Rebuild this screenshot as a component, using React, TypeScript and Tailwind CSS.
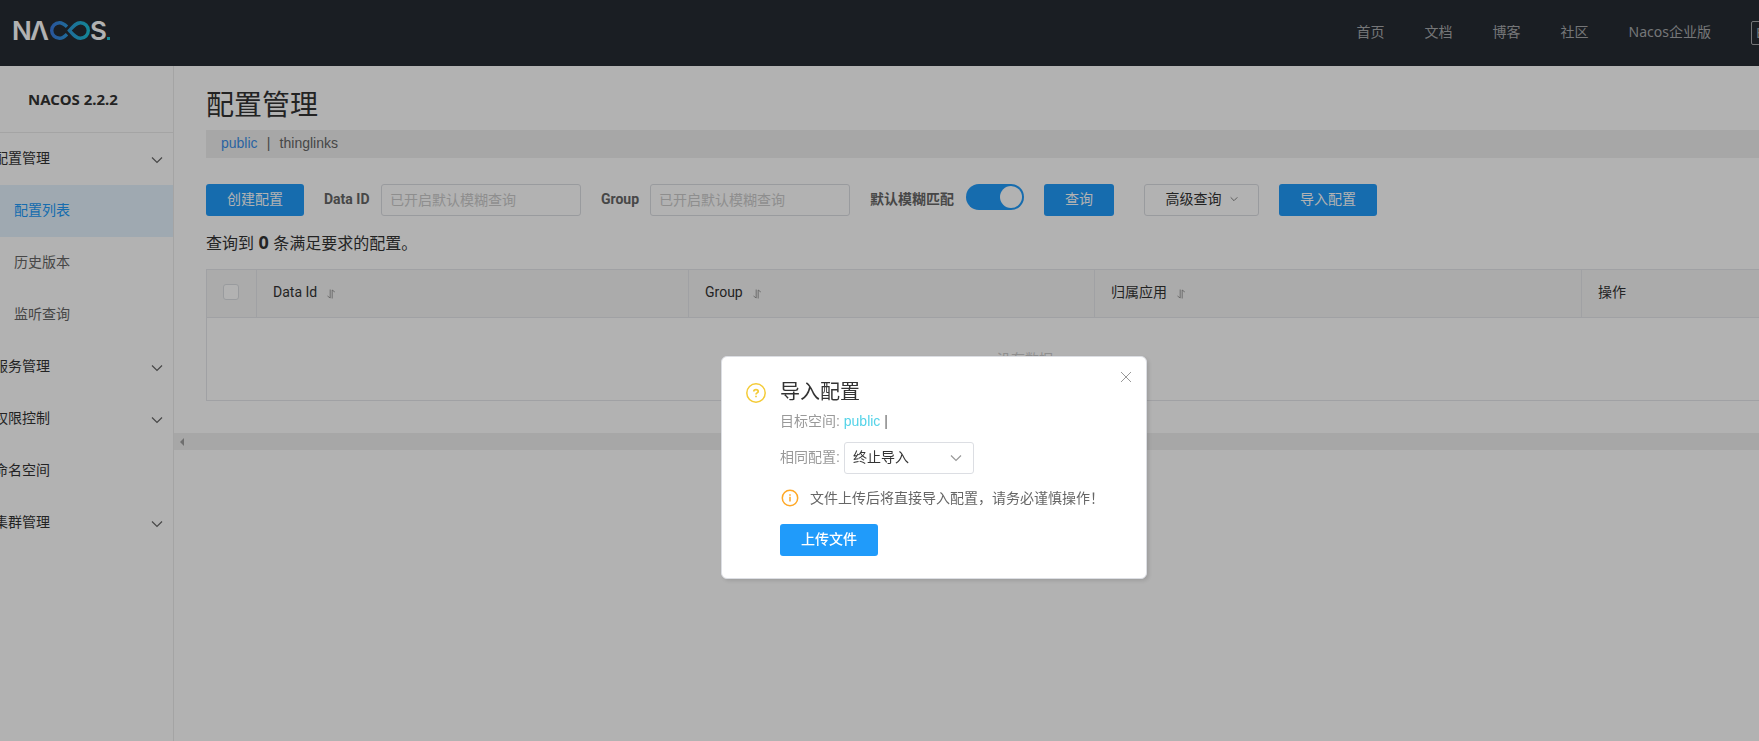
import { useState } from "react";

const FONT = "font-['Liberation_Sans','Noto_Sans_CJK_SC',sans-serif]";

const NAV_LINKS = ["首页", "文档", "博客", "社区", "Nacos企业版"];

type MenuItem = {
  label: string;
  child?: boolean;
  active?: boolean;
  expandable?: boolean;
};

const MENU: MenuItem[] = [
  { label: "配置管理", expandable: true },
  { label: "配置列表", child: true, active: true },
  { label: "历史版本", child: true },
  { label: "监听查询", child: true },
  { label: "服务管理", expandable: true },
  { label: "权限控制", expandable: true },
  { label: "命名空间" },
  { label: "集群管理", expandable: true },
];

function Chevron({ className }: { className: string }) {
  return (
    <svg viewBox="0 0 12 12" className={className} fill="none" stroke="currentColor" aria-hidden="true">
      <path d="M1 3.5 L6 8.5 L11 3.5" strokeWidth="1.2" />
    </svg>
  );
}

function SortIcon() {
  return (
    <svg viewBox="0 0 8 10" className="h-2.5 w-2" fill="none" stroke="currentColor" strokeWidth="0.8" aria-hidden="true">
      <path d="M0.5 7 L3.2 9 V0.5 M5.200 9.5 V1 L7.8 3" />
    </svg>
  );
}

function Logo() {
  return (
    <svg viewBox="-2 -6 100 36" className="h-9 w-[100px]" role="img" aria-label="NACOS">
      <defs>
        <linearGradient id="loop" gradientUnits="userSpaceOnUse" x1="37" y1="0" x2="76" y2="0">
          <stop offset="0" stopColor="#3b7be0" />
          <stop offset="1" stopColor="#1cc3d8" />
        </linearGradient>
      </defs>
      <g fill="#fff" className="font-['Inter',sans-serif] text-[26px] font-semibold">
        <text x="-2" y="21">N</text>
        <text x="16" y="21">Λ</text>
        <text x="76" y="21">S</text>
      </g>
      <path
        d="M53 7.800 C50 4.800 48 3.700 45.500 3.700 A7.800 7.800 0 0 0 45.500 19.300 C48 19.300 50 18.200 53 15.200 M55.500 11.500 C59.500 7 62 3.700 66.500 3.700 A7.800 7.800 0 0 1 66.500 19.300 C62 19.300 59.500 16 55.500 11.500 Z"
        fill="none"
        stroke="url(#loop)"
        strokeWidth="3.400"
      />
      <rect x="93" y="18" width="3" height="3" fill="#1cc3d8" />
    </svg>
  );
}

function Header() {
  return (
    <header className="flex h-[66px] items-center justify-between bg-[#262c33] pl-3">
      <a href="#home" className="-mt-1">
        <Logo />
      </a>
      <nav className="-mr-8 flex shrink-0 items-center font-['Noto_Sans','Noto_Sans_CJK_SC',sans-serif] text-sm text-[#a8aaad]">
        {NAV_LINKS.map((label) => (
          <a key={label} href="#nav" className="px-5 pb-0.5">
            {label}
          </a>
        ))}
        <button type="button" className="ml-5 h-6 w-10 rounded-xs border border-[#a8aaad] pl-1 text-left leading-5">
          En
        </button>
      </nav>
    </header>
  );
}

function Sidebar() {
  return (
    <aside className="w-[174px] shrink-0 overflow-hidden border-r border-[#ebebeb]">
      <div className="-ml-[27px]">
        <h2 className="flex h-[67px] items-center justify-center border-b border-[#ebebeb] font-['Noto_Sans',sans-serif] text-[15px] font-bold text-[#333]">
          NACOS 2.2.2
        </h2>
        <ul>
          {MENU.map((item) => (
            <li key={item.label}>
              <a
                href="#menu"
                className={`flex h-[52px] items-center justify-between pr-2.5 pb-0.5 text-sm ${
                  item.child ? "pl-[41px]" : "pl-[21px]"
                } ${item.active ? "bg-[#e4f3fe] text-[#209bfa]" : item.child ? "text-[#666]" : "text-[#333]"}`}
              >
                {item.label}
                {item.expandable ? <Chevron className="mt-1 size-3 text-[#666]" /> : null}
              </a>
            </li>
          ))}
        </ul>
      </div>
    </aside>
  );
}

const PRIMARY = "h-8 shrink-0 rounded-[3px] bg-[#209bfa] pb-0.5 text-sm text-white";
const FIELD = "h-8 w-[200px] rounded-[3px] border border-[#dcdee3] px-2 text-sm outline-none placeholder:text-[#ccc]";
const LABEL = "pb-0.5 font-['Roboto','Noto_Sans_CJK_SC',sans-serif] text-sm font-bold text-[#666]";

function SearchBar() {
  const [fuzzy, setFuzzy] = useState(true);

  return (
    <form className="mt-[26px] flex h-8 items-center whitespace-nowrap" onSubmit={(event) => event.preventDefault()}>
      <button type="button" className={`${PRIMARY} w-[98px]`}>
        创建配置
      </button>
      <label htmlFor="dataId" className={`${LABEL} ml-5 w-[57px]`}>
        Data ID
      </label>
      <input id="dataId" type="text" placeholder="已开启默认模糊查询" className={FIELD} />
      <label htmlFor="group" className={`${LABEL} ml-5 w-[49px]`}>
        Group
      </label>
      <input id="group" type="text" placeholder="已开启默认模糊查询" className={FIELD} />
      <label htmlFor="fuzzy" className={`${LABEL} ml-5`}>
        默认模糊匹配
      </label>
      <input
        id="fuzzy"
        type="checkbox"
        role="switch"
        checked={fuzzy}
        onChange={(event) => setFuzzy(event.target.checked)}
        className="ml-3 flex h-[26px] w-[58px] shrink-0 appearance-none self-start rounded-full bg-[#ccc] p-0.5 before:size-[22px] before:rounded-full before:bg-white checked:justify-end checked:bg-[#209bfa]"
      />
      <button type="submit" className={`${PRIMARY} ml-5 w-[70px]`}>
        查询
      </button>
      <button
        type="button"
        className="ml-[30px] flex h-8 w-[115px] items-center justify-center gap-2 rounded-[3px] border border-[#dcdee3] pb-0.5 text-sm text-[#333]"
      >
        高级查询
        <Chevron className="size-2 text-[#666]" />
      </button>
      <button type="button" className={`${PRIMARY} ml-5 w-[98px]`}>
        导入配置
      </button>
    </form>
  );
}

function ConfigTable() {
  const head = "border border-[#e6e7eb] px-4 pb-1 text-left text-sm font-normal";

  return (
    <table className="mt-3.5 w-full table-fixed border-collapse border border-[#e6e7eb] font-['Roboto','Noto_Sans_CJK_SC',sans-serif] text-[#333]">
      <colgroup>
        <col className="w-[50px]" />
        <col className="w-[432px]" />
        <col className="w-[406px]" />
        <col className="w-[487px]" />
        <col />
      </colgroup>
      <thead>
        <tr className="h-12 bg-[#f5f5f5]">
          <th className="border border-[#e6e7eb] pb-1 pl-4">
            <input
              type="checkbox"
              aria-label="全选"
              className="block size-4 appearance-none rounded-[3px] border border-[#dcdee3] bg-white"
            />
          </th>
          {["Data Id", "Group", "归属应用"].map((label) => (
            <th key={label} className={head}>
              <button type="button" className="flex items-center gap-2.5">
                {label}
                <span className="mt-1 text-[#888]">
                  <SortIcon />
                </span>
              </button>
            </th>
          ))}
          <th className={head}>操作</th>
        </tr>
      </thead>
      <tbody>
        <tr>
          <td colSpan={5} className="h-[83px] text-center text-sm text-[#ccc]">
            没有数据
          </td>
        </tr>
      </tbody>
    </table>
  );
}

function ImportDialog() {
  const [policy, setPolicy] = useState("终止导入");

  return (
    <div className="fixed inset-0 flex items-start justify-center bg-black/30 pt-[356px] pl-[109px]">
      <div
        role="dialog"
        aria-labelledby="import-title"
        className="flex w-[426px] items-start rounded-md border border-[#dcdee3] bg-white pt-5 pr-3 pb-[22px] pl-6 text-sm shadow-[2px_2px_4px_rgba(0,0,0,0.12)]"
      >
        <svg viewBox="0 0 20 20" className="mt-1.5 size-5 shrink-0" fill="none" stroke="#f4cb37" aria-hidden="true">
          <circle cx="10" cy="10" r="9.200" strokeWidth="1.500" />
          <path d="M7.800 8.400 C7.800 6 12.200 6 12.200 8.400 C12.200 9.900 10 9.900 10 11.500 M10 12.800 V14.200" strokeWidth="1.700" />
        </svg>
        <div className="ml-3.5 flex-1">
          <h3 id="import-title" className="text-xl leading-[30px] text-[#333]">
            导入配置
          </h3>
          <p className="mt-1 leading-5 text-[#999]">
            目标空间: <span className="text-[#54d3e8]">public</span> <span className="text-[#666]">|</span>
          </p>
          <div className="mt-[11px] flex items-center">
            <label htmlFor="policy" className="w-16 pb-0.5 text-[#999]">
              相同配置:
            </label>
            <div className="grid items-center">
              <select
                id="policy"
                value={policy}
                onChange={(event) => setPolicy(event.target.value)}
                className="col-start-1 row-start-1 h-8 w-[130px] appearance-none rounded-[3px] border border-[#dcdee3] bg-white px-2 pb-0.5 text-[#333]"
              >
                <option>终止导入</option>
                <option>跳过</option>
                <option>覆盖</option>
              </select>
              <Chevron className="pointer-events-none col-start-1 row-start-1 mr-3 size-3 justify-self-end text-[#999]" />
            </div>
          </div>
          <p className="mt-3.5 flex items-center leading-5 text-[#666]">
            <svg viewBox="0 0 18 18" className="mr-[11px] ml-px size-[18px]" fill="none" stroke="#ffa826" aria-hidden="true">
              <circle cx="9" cy="9" r="7.700" strokeWidth="1.500" />
              <path d="M9 5.200 V6.700 M9 7.700 V12.500" strokeWidth="1.500" />
            </svg>
            文件上传后将直接导入配置，请务必谨慎操作！
          </p>
          <button type="button" className={`${PRIMARY} mt-4 w-[98px] font-medium`}>
            上传文件
          </button>
        </div>
        <button type="button" aria-label="关闭" className="-mt-1.5 -ml-6 flex size-4 justify-center">
          <svg viewBox="0 0 12 12" className="size-3" fill="none" stroke="#999" aria-hidden="true">
            <path d="M1 1 L11 11 M11 1 L1 11" />
          </svg>
        </button>
      </div>
    </div>
  );
}

export default function App() {
  return (
    <div className={`${FONT} flex min-h-screen flex-col overflow-hidden bg-white text-[#333]`}>
      <Header />
      <div className="flex flex-1">
        <Sidebar />
        <main className="min-w-0 flex-1">
          <div className="overflow-hidden pl-8">
            <div className="min-w-[1638px] pt-[22px] pb-8">
              <h1 className="text-[28px] leading-9">配置管理</h1>
              <div className="mt-1.5 flex h-7 items-center bg-[#efefef] pb-0.5 pl-[15px] text-sm text-[#666]">
                <a href="#public" className="text-[#3d8fe8]">
                  public
                </a>
                <span className="mx-[9px] w-1 text-center">|</span>
                <a href="#thinglinks">thinglinks</a>
              </div>
              <SearchBar />
              <p className="mt-4 text-base leading-[22px]">
                查询到 <strong className="font-['Noto_Sans',sans-serif] text-lg leading-5">0</strong> 条满足要求的配置。
              </p>
              <ConfigTable />
            </div>
          </div>
          <div className="flex h-[17px] items-center bg-[#f0f0f0] pl-1.5">
            <svg viewBox="0 0 4 8" className="h-2 w-1" fill="#a0a0a0" aria-hidden="true">
              <path d="M4 0 V8 L0 4 Z" />
            </svg>
          </div>
        </main>
      </div>
      <ImportDialog />
    </div>
  );
}
